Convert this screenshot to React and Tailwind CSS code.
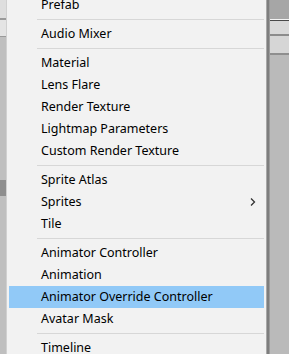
import React from "react";

const groups = [
  ["Prefab"],
  ["Audio Mixer"],
  ["Material", "Lens Flare", "Render Texture", "Lightmap Parameters", "Custom Render Texture"],
  ["Sprite Atlas", "Sprites", "Tile"],
  ["Animator Controller", "Animation", "Animator Override Controller", "Avatar Mask"],
  ["Timeline"],
];

function Item({ label }) {
  const hi = label === "Animator Override Controller";
  return (
    <div className={`relative h-[22px] flex items-center pl-[32px] pr-[10px] ml-[2px] mr-[2px] ${hi ? "bg-[#91c9f7]" : ""}`}>
      <span className="text-[12.5px] text-black leading-none">{label}</span>
      {label === "Sprites" && (
        <svg className="absolute left-[241px] top-[7px]" width="6" height="8" viewBox="0 0 6 8">
          <path d="M1 0.5 L4.5 4 L1 7.5" stroke="#333" strokeWidth="1.3" fill="none" />
        </svg>
      )}
    </div>
  );
}

export default function App() {
  return (
    <div className="w-[289px] h-[354px] overflow-hidden bg-[#bdbdbd] flex" style={{ fontFamily: '"Noto Sans", "Open Sans", sans-serif' }}>
      {/* left background strip */}
      <div className="w-[6px] flex flex-col shrink-0">
        <div className="h-[18px] bg-[#dedede]" />
        <div className="h-[2px] bg-[#9a9a9a]" />
        <div className="h-[16px] bg-[#e4e4e4]" />
        <div className="h-[1px] bg-[#9a9a9a]" />
        <div className="h-[143px] bg-[#bfbfbf]" />
        <div className="h-[16px] bg-[#8e8e8e]" />
        <div className="flex-1 bg-[#bfbfbf]" />
      </div>
      <div className="w-[1px] bg-[#d0d0d0] shrink-0" />
      {/* menu */}
      <div className="w-[259px] shrink-0 bg-[#f2f2f2] flex">
        <div className="flex-1 flex flex-col mt-[-6px]">
          {groups.map((g, gi) => (
            <div key={gi} className="flex flex-col">
              {gi > 0 && (
                <div className="h-[7px] flex items-center pl-[30px] pr-[2px]">
                  <div className="h-[1px] w-full bg-[#d7d7d7]" />
                </div>
              )}
              {g.map((l) => (
                <Item key={l} label={l} />
              ))}
            </div>
          ))}
        </div>
      </div>
      {/* shadow */}
      <div className="w-[1px] bg-[#a8a8a8] shrink-0" />
      <div className="w-[2px] bg-[#7e7e7e] shrink-0" />
      <div className="w-[1px] bg-[#9a9a9a] shrink-0" />
      {/* right background */}
      <div className="flex-1 flex flex-col">
        <div className="h-[19px] bg-[#a6a6a6]" />
        <div className="h-[1px] bg-[#f4f4f4]" />
        <div className="h-[1px] bg-[#4a4a4a]" />
        <div className="h-[13px] bg-[#d9d9d9]" />
        <div className="h-[2px] bg-[#8c8c8c]" />
        <div className="h-[17px] bg-[#d6d6d6]" />
        <div className="h-[2px] bg-[#8e8e8e]" />
        <div className="flex-1 bg-[#bababa]" />
      </div>
    </div>
  );
}
